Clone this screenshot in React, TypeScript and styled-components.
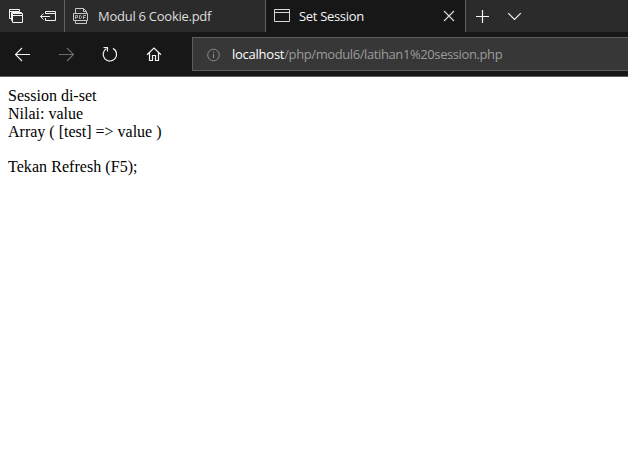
import React from "react";
import styled, { createGlobalStyle } from "styled-components";

const GlobalStyle = createGlobalStyle`
  * { box-sizing: border-box; }
  html, body { margin: 0; height: 100%; overflow: hidden; background: #fff; }
`;

const Browser = styled.div`
  display: flex;
  flex-direction: column;
  width: 628px;
  height: 453px;
  background: #fff;
  font-family: "Open Sans", "Noto Sans", sans-serif;
  font-size: 13px;
`;

const TabBar = styled.div`
  display: flex;
  height: 32px;
  background: #2b2b2b;
`;

const TabActions = styled.div`
  display: flex;
  flex: none;
  width: 65px;
  border-right: 1px solid #626262;
`;

const Tab = styled.div<{ $active?: boolean; $width: number }>`
  display: flex;
  flex: none;
  width: ${(p) => p.$width}px;
  border-right: 1px solid #626262;
  background: ${(p) => (p.$active ? "#171717" : "#2b2b2b")};
  color: ${(p) => (p.$active ? "#f4f4f4" : "#dedede")};
`;

const TabTitle = styled.span<{ $tracking: number }>`
  flex: 1;
  line-height: 32px;
  white-space: nowrap;
  letter-spacing: ${(p) => p.$tracking}px;
`;

const Toolbar = styled.div`
  display: flex;
  align-items: flex-start;
  height: 45px;
  background: #171717;
  border-bottom: 1px solid #626262;
`;

const NavButtons = styled.div`
  display: flex;
  width: 192px;
  height: 44px;
`;

const AddressField = styled.div`
  display: flex;
  flex: 1;
  height: 34px;
  margin-top: 5px;
  background: #373737;
  border: 1px solid #5e5e5e;
  border-right: 0;
`;

const Url = styled.span`
  line-height: 33px;
  color: #9b9b9b;
  white-space: nowrap;
  letter-spacing: -0.4px;
`;

const Host = styled.span`
  color: #fff;
  letter-spacing: -0.25px;
`;

const Glyph = styled.svg<{ $color?: string }>`
  display: block;
  flex: none;
  fill: none;
  stroke: ${(p) => p.$color ?? "#f2f2f2"};
`;

const Page = styled.main`
  flex: 1;
  padding: 10px 8px;
  font-family: "Liberation Serif", "Times New Roman", serif;
  font-size: 16px;
  line-height: 17.8px;
  color: #000;
`;

const Line = styled.div<{ $tracking?: number }>`
  white-space: pre;
  min-height: 17.8px;
  letter-spacing: ${(p) => p.$tracking ?? 0}px;
`;

export default function App() {
  return (
    <Browser>
      <GlobalStyle />
      <TabBar>
        <TabActions>
          <Glyph width="32" height="32">
            <path d="M11.5 18.5H9.5V9.5H19.5V11.5M9.5 11.5H19.5M12.5 20.5H11.5V12.5H21.5V13.5" />
            <path d="M12.5 13.5H22.5V22.5H12.5ZM12.5 15.5H22.5" />
          </Glyph>
          <Glyph width="32" height="32">
            <path d="M13.5 14V11.5H23.5V20.5H13.5V18M13.5 13.5H23.5M8.5 16.5H18M11.5 13.5L8.5 16.5L11.5 19.5" />
          </Glyph>
        </TabActions>
        <Tab $width={201}>
          <Glyph width="33" height="32" $color="#c8c8c8">
            <path d="M10.5 13V8.5H18.5L21.5 11.5V13M18.5 8.5V11.5H21.5M10.5 20V23.5H21.5V20M8.5 13.5H22.5V20.5H8.5Z" />
            <path d="M10.5 19V15.5H12.5V17.5H10.5M14.5 15.5V18.5H15.5L16.5 17.5V16.5L15.5 15.5ZM18.5 19V15.5H21M18.5 17.5H20.5" strokeWidth="0.8" />
          </Glyph>
          <TabTitle $tracking={-0.26}>Modul 6 Cookie.pdf</TabTitle>
        </Tab>
        <Tab $width={200} $active>
          <Glyph width="33" height="32" $color="#d8d8d8">
            <path d="M8.5 9.5H23.5V21.5H8.5ZM8.5 12.5H23.5" />
          </Glyph>
          <TabTitle $tracking={-0.32}>Set Session</TabTitle>
          <Glyph width="32" height="32" $color="#dedede">
            <path d="M11 11L21 21M21 11L11 21" strokeWidth="1.1" />
          </Glyph>
        </Tab>
        <Glyph width="32" height="32">
          <path d="M10 16.5H23M16.5 10V23" strokeWidth="1.2" />
        </Glyph>
        <Glyph width="32" height="32">
          <path d="M10.2 13.2L16.5 19.5L22.8 13.2" strokeWidth="1.2" />
        </Glyph>
      </TabBar>
      <Toolbar>
        <NavButtons>
          <Glyph width="44" height="44">
            <path d="M30 22.5H16M22 16L15.5 22.5L22 29" strokeWidth="1.1" />
          </Glyph>
          <Glyph width="44" height="44" $color="#6d6d6d">
            <path d="M15 22.5H29M23 16L29.5 22.5L23 29" strokeWidth="1.1" />
          </Glyph>
          <Glyph width="44" height="44">
            <path d="M18.4 16.6A6.7 6.7 0 1 0 25 16.4M15.5 15.5H19.5V19.5" strokeWidth="1.2" />
          </Glyph>
          <Glyph width="44" height="44">
            <path d="M15 22.7L22 16L29 22.7M17.5 20.5V28.5H20.5V23.5H23.5V28.5H26.5V20.5" strokeWidth="1.2" />
          </Glyph>
        </NavButtons>
        <AddressField>
          <Glyph width="39" height="32" $color="#8b8b8b">
            <circle cx="20.5" cy="17" r="5.8" />
            <path d="M20.5 15.8V20M20.5 13.6V14.7" />
          </Glyph>
          <Url>
            <Host>localhost</Host>/php/modul6/latihan1%20session.php
          </Url>
        </AddressField>
      </Toolbar>
      <Page>
        <Line>Session di-set</Line>
        <Line>Nilai: value</Line>
        <Line>{"Array ( [test] => value )"}</Line>
        <Line />
        <Line $tracking={0.05}>Tekan Refresh (F5);</Line>
      </Page>
    </Browser>
  );
}
